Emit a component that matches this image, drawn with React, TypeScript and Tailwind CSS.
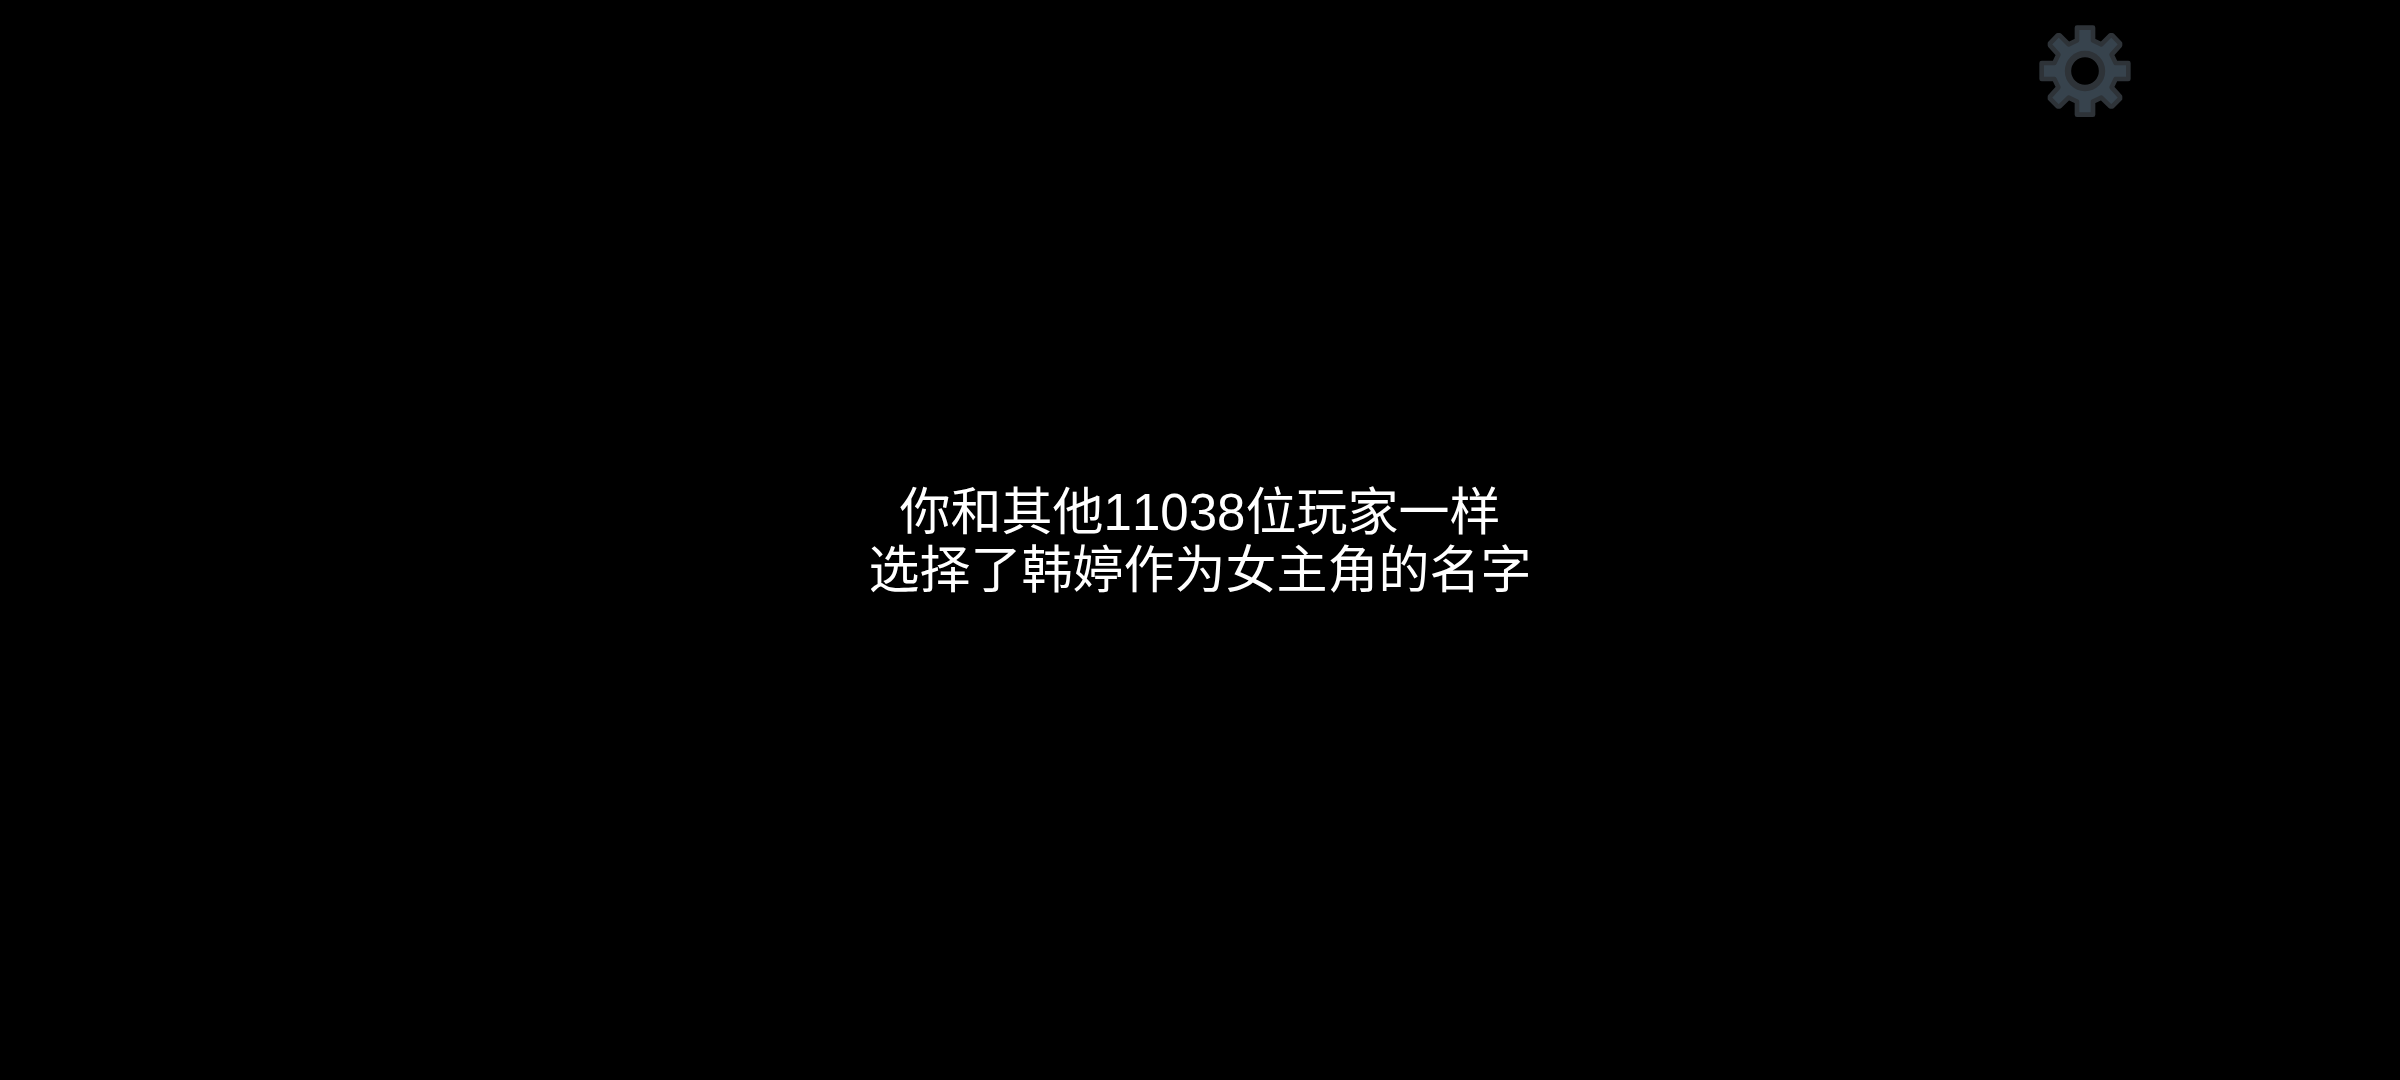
function GearIcon() {
  return (
    <svg viewBox="-138 -138 276 276" className="block size-23" aria-hidden="true">
      <path
        fillRule="evenodd"
        fill="#37434d"
        d="M-24-130H24V-92L49-80L76-107H82L105-83V-77L80-49L92-24H130V24H92L80 49L105 77V83L82 106H76L49 80L24 92V131H-24V92L-49 80L-76 106H-82L-105 83V77L-80 49L-92 24H-130V-24H-92L-80-49L-105-77V-83L-82-107H-76L-49-80L-24-92ZM0-51A51 51 0 1 0 0 51A51 51 0 1 0 0-51Z"
      />
      <g fill="none" stroke="#2e3338" strokeLinejoin="round">
        <path
          strokeWidth="14"
          d="M-24-130H24V-92L49-80L76-107H82L105-83V-77L80-49L92-24H130V24H92L80 49L105 77V83L82 106H76L49 80L24 92V131H-24V92L-49 80L-76 106H-82L-105 83V77L-80 49L-92 24H-130V-24H-92L-80-49L-105-77V-83L-82-107H-76L-49-80L-24-92Z"
        />
        <circle r="51" strokeWidth="19" />
      </g>
    </svg>
  );
}

export default function App() {
  return (
    <main
      lang="zh-CN"
      className="relative flex min-h-screen items-center justify-center bg-black pt-1 font-['Liberation_Sans','Noto_Sans_CJK_SC',sans-serif] text-white"
    >
      <button type="button" aria-label="设置" className="absolute top-[25px] right-[269px] cursor-pointer">
        <GearIcon />
      </button>
      <p className="text-center text-[51px] leading-[58px] [font-kerning:none]">
        你和其他11038位玩家一样
        <br />
        选择了韩婷作为女主角的名字
      </p>
    </main>
  );
}
